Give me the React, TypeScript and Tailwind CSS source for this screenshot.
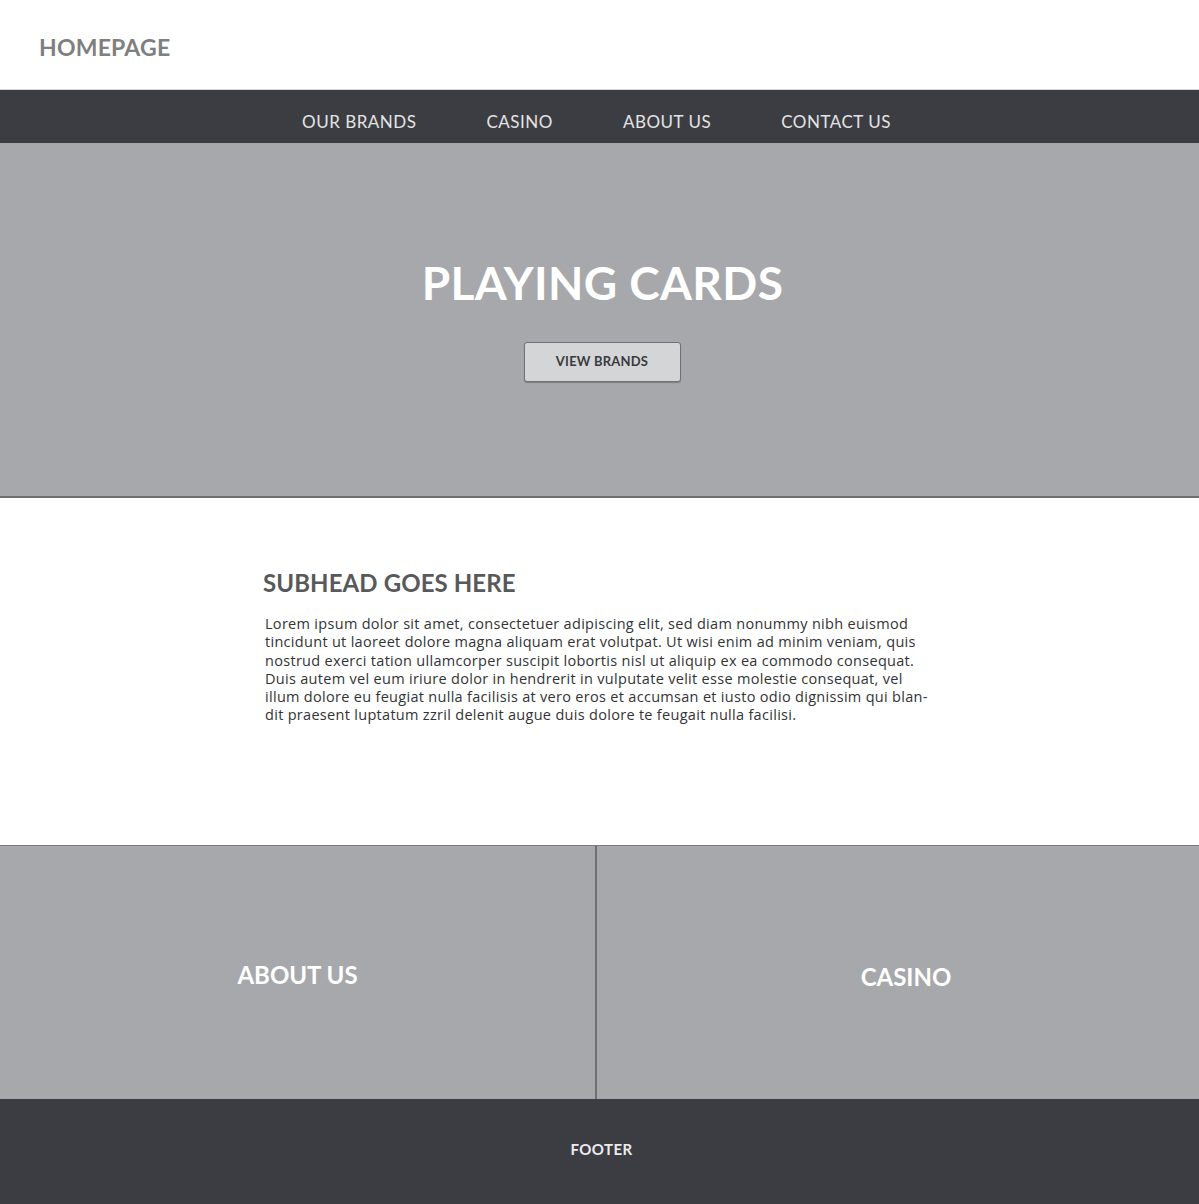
import React from 'react';

const navItems = ['OUR BRANDS', 'CASINO', 'ABOUT US', 'CONTACT US'];

const loremLines = [
    'Lorem ipsum dolor sit amet, consectetuer adipiscing elit, sed diam nonummy nibh euismod',
    'tincidunt ut laoreet dolore magna aliquam erat volutpat. Ut wisi enim ad minim veniam, quis',
    'nostrud exerci tation ullamcorper suscipit lobortis nisl ut aliquip ex ea commodo consequat.',
    'Duis autem vel eum iriure dolor in hendrerit in vulputate velit esse molestie consequat, vel',
    'illum dolore eu feugiat nulla facilisis at vero eros et accumsan et iusto odio dignissim qui blan-',
    'dit praesent luptatum zzril delenit augue duis dolore te feugait nulla facilisi.',
];

export default function App() {
    return (
        <div className="w-[1199px] min-h-[1204px] bg-white font-['Lato','Open_Sans',sans-serif]">
            <header className="h-[90px] flex items-center px-[39px] border-b border-[#d6d6d6]">
                <h1 className="text-[23px] font-bold text-[#7f7f80] tracking-[0.2px] mt-[6px]">HOMEPAGE</h1>
            </header>

            <nav className="h-[53px] bg-[#3c3d42] flex items-center justify-center pr-[6px] pt-[10px]">
                <ul className="flex gap-[70px]">
                    {navItems.map(item => (
                        <li key={item} className="text-[17px] text-[#e4e4e5] tracking-[0.5px]">{item}</li>
                    ))}
                </ul>
            </nav>

            <section className="h-[355px] bg-[#a7a8ab] border-b-2 border-[#6e6f72] flex flex-col items-center pt-[111px]">
                <h2 className="text-[46px] leading-[58px] font-bold text-white tracking-[0.4px] ml-[6px]">PLAYING CARDS</h2>
                <button className="mt-[30px] ml-[5px] w-[157px] h-[40px] bg-[#d4d5d7] border border-[#707173] rounded-[3px] text-[13px] font-bold text-[#3a3a3c] tracking-[0.2px] shadow-[0_1px_1px_rgba(0,0,0,0.25)]">
                    VIEW BRANDS
                </button>
            </section>

            <section className="h-[347px] pl-[263px] pt-[70px]">
                <h3 className="text-[24px] leading-[30px] font-bold text-[#58595b] tracking-[0.1px]">SUBHEAD GOES HERE</h3>
                <p className="mt-[17px] ml-[2px] font-['Open_Sans',sans-serif] text-[14.5px] leading-[18.3px] text-[#333335] tracking-[0.3px]">
                    {loremLines.map(line => (
                        <span key={line} className="block whitespace-nowrap">{line}</span>
                    ))}
                </p>
            </section>

            <section className="h-[254px] bg-[#a7a8ab] border-t border-[#7b7c7f] flex">
                <div className="w-[595px] flex items-center justify-center pt-[5px]">
                    <span className="text-[24px] font-bold text-white">ABOUT US</span>
                </div>
                <div className="w-[2px] bg-[#6e6f72]"></div>
                <div className="flex-1 flex items-center justify-center pt-[9px] pl-[16px]">
                    <span className="text-[24px] font-bold text-white">CASINO</span>
                </div>
            </section>

            <footer className="h-[105px] bg-[#3c3d42] flex items-center justify-center">
                <span className="text-[15px] font-bold text-[#ececec] tracking-[0.4px] mt-[-4px] ml-[4px]">FOOTER</span>
            </footer>
        </div>
    );
}
